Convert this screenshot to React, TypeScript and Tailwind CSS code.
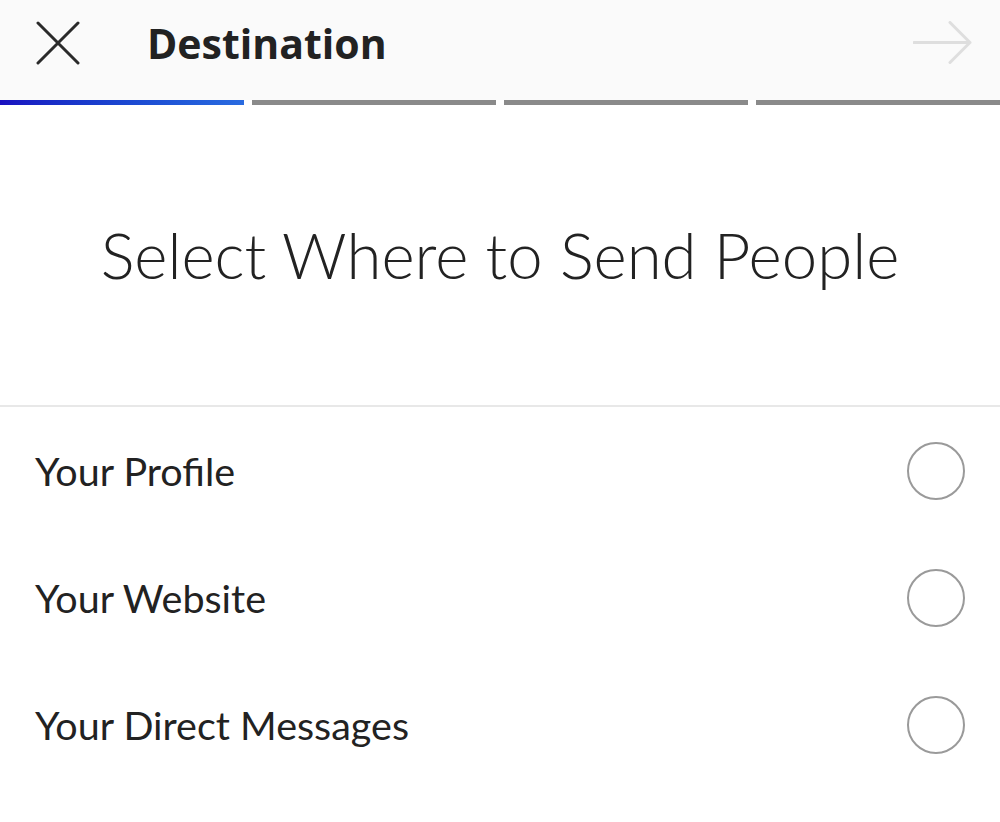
import { type FC } from 'react';

const OPTIONS = ['Your Profile', 'Your Website', 'Your Direct Messages'];

const CloseIcon: FC = () => (
    <svg width="44" height="44" viewBox="0 0 44 44" fill="none" stroke="#2a2a2a" strokeWidth="3" strokeLinecap="round">
        <path d="M2 2L42 42M42 2L2 42" />
    </svg>
);

const ArrowIcon: FC = () => (
    <svg width="60" height="44" viewBox="0 0 60 44" fill="none" stroke="#dedede" strokeWidth="3" strokeLinecap="round" strokeLinejoin="round">
        <path d="M1 21.5H57M37 1.5L57 21.5L37 41.5" />
    </svg>
);

const OptionRow: FC<{ label: string }> = ({ label }) => (
    <div className="flex h-[127px] items-center justify-between pl-[35px] pr-[35px]">
        <span className="text-[39.5px] leading-none text-[#222]">{label}</span>
        <div className="h-[58px] w-[58px] rounded-full border-2 border-[#9a9a9a]" />
    </div>
);

export default function App() {
    return (
        <div className="min-h-[822px] w-[1000px] bg-white font-['Lato','Noto_Sans',sans-serif]">
            {/* Header */}
            <div className="flex h-[100px] items-center bg-[#fafafa] pb-[14px]">
                <div className="ml-[36px] flex items-center">
                    <CloseIcon />
                </div>
                <h1 className="ml-[67px] font-['Open_Sans','Noto_Sans',sans-serif] text-[41px] font-bold leading-none text-[#222]">
                    Destination
                </h1>
                <div className="ml-auto mr-[27px] flex items-center">
                    <ArrowIcon />
                </div>
            </div>

            {/* Progress */}
            <div className="flex h-[5px] gap-[8px]">
                <div className="flex-1 bg-gradient-to-r from-[#1a0fc0] to-[#2a6be0]" />
                <div className="flex-1 bg-[#8a8a8a]" />
                <div className="flex-1 bg-[#8a8a8a]" />
                <div className="flex-1 bg-[#8a8a8a]" />
            </div>

            {/* Title */}
            <div className="flex h-[300px] items-center justify-center">
                <h2 className="text-[63.5px] font-light leading-none text-[#222]">Select Where to Send People</h2>
            </div>

            {/* Options */}
            <div className="border-t-2 border-[#e8e8e8]">
                {OPTIONS.map((label) => (
                    <OptionRow key={label} label={label} />
                ))}
            </div>
        </div>
    );
}
